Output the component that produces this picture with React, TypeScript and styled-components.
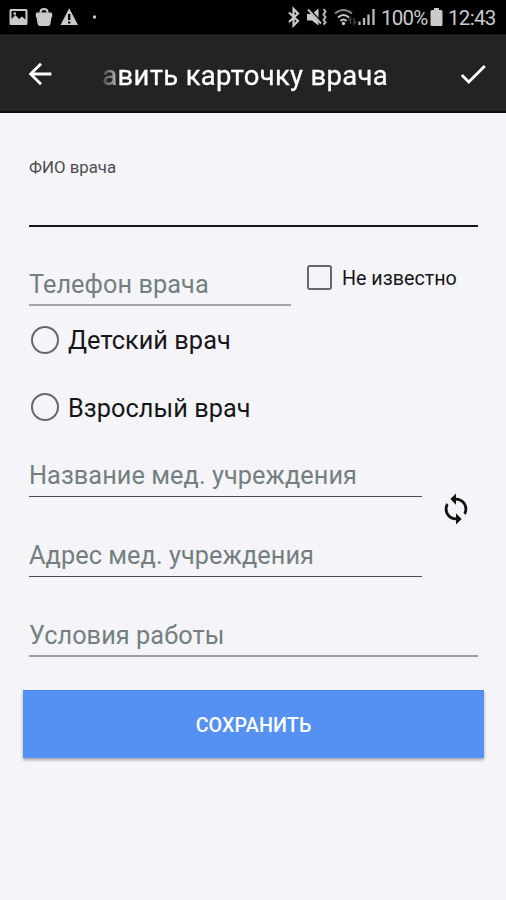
import React from "react";
import styled, { createGlobalStyle } from "styled-components";
import { MdArrowBack, MdCheck, MdSync } from "react-icons/md";

const GlobalStyle = createGlobalStyle`
  * { box-sizing: border-box; }
  body { margin: 0; background: #f4f4f9; font-family: Roboto, "Noto Sans", sans-serif; }
  svg { display: block; flex: none; }
`;

const Screen = styled.div`
  width: 506px;
  height: 900px;
  display: flex;
  flex-direction: column;
  background: #f4f4f9;
  overflow: hidden;
`;

const StatusBar = styled.div`
  height: 34px;
  display: flex;
  align-items: center;
  justify-content: space-between;
  padding: 0 11px 0 9px;
  background: #000;
  color: #cacaca;
`;

const StatusGroup = styled.div`
  display: flex;
  align-items: center;
`;

const StatusText = styled.span<{ $spacing: number; $width: number }>`
  width: ${(p) => p.$width}px;
  padding-top: 2px;
  font-size: 20.5px;
  letter-spacing: ${(p) => p.$spacing}px;
  line-height: 32px;
  white-space: nowrap;
`;

const Gap = styled.span<{ $w: number }>`
  width: ${(p) => p.$w}px;
`;

const AppBar = styled.header`
  height: 79px;
  display: flex;
  align-items: center;
  padding: 1px 16px 0 23px;
  background: #232323;
  border-bottom: 2px solid #111;
  border-top: 1px solid #171717;
  color: #fff;
`;

const TitleWindow = styled.div`
  width: 285px;
  height: 50px;
  margin-left: 46px;
  margin-right: auto;
  display: flex;
  justify-content: flex-end;
  overflow: hidden;
  mask-image: linear-gradient(to right, rgba(0, 0, 0, 0.2), rgba(0, 0, 0, 0.6) 12px, #000 15px);
`;

const Title = styled.h1`
  margin: 0;
  font-size: 27.4px;
  font-weight: 400;
  letter-spacing: 0.35px;
  line-height: 54px;
  white-space: nowrap;
  -webkit-text-stroke: 0.3px #fff;
`;

const Form = styled.main`
  display: flex;
  flex-direction: column;
  padding: 0 22px 0 23px;
`;

const NameField = styled.div`
  height: 114px;
  margin: 0 6px;
  padding-top: 43px;
  border-bottom: 2px solid #17171b;
`;

const Caption = styled.label`
  display: block;
  font-size: 16.8px;
  line-height: 22px;
  color: #4c4c50;
`;

const PhoneRow = styled.div`
  height: 79px;
  display: flex;
  margin-left: 6px;
`;

const Field = styled.div<{ $width: number; $height: number; $line: string; $thickness: number }>`
  width: ${(p) => p.$width}px;
  height: ${(p) => p.$height}px;
  display: flex;
  align-items: flex-end;
  padding-bottom: ${(p) => 5 - p.$thickness}px;
  border-bottom: ${(p) => p.$thickness}px solid ${(p) => p.$line};
`;

const Placeholder = styled.span`
  font-size: 25.3px;
  line-height: 32px;
  letter-spacing: 0.06px;
  color: #73807f;
  white-space: nowrap;
`;

const CheckOption = styled.label`
  height: 26px;
  display: flex;
  align-items: center;
  margin: 37px 0 0 16px;
  font-size: 19.7px;
  line-height: 24px;
  color: #161618;
  white-space: nowrap;
`;

const CheckLabel = styled.span`
  padding-top: 3px;
`;

const CheckBox = styled.span`
  width: 25px;
  height: 25px;
  margin-right: 10px;
  border: 2.5px solid #68686c;
  border-radius: 3px;
`;

const RadioGroup = styled.div`
  display: flex;
  flex-direction: column;
  padding-left: 8px;
`;

const RadioOption = styled.label`
  height: 67.5px;
  display: flex;
  align-items: center;
  font-size: 25.3px;
  line-height: 30px;
  letter-spacing: 0.06px;
  color: #161618;
`;

const RadioLabel = styled.span`
  padding-top: 3px;
`;

const RadioMark = styled.span`
  width: 28px;
  height: 28px;
  margin-right: 9px;
  border: 2.5px solid #68686c;
  border-radius: 50%;
`;

const ClinicRow = styled.div`
  display: flex;
  align-items: center;
  margin-left: 6px;
`;

const ClinicFields = styled.div`
  width: 393px;
  display: flex;
  flex-direction: column;
`;

const SyncButton = styled.button`
  margin: 0 0 0 17px;
  padding: 0;
  border: 0;
  background: none;
  color: #111;
`;

const LastField = styled.div`
  margin-left: 6px;
`;

const SaveButton = styled.button`
  height: 68px;
  margin-top: 33px;
  padding: 2px 0 0;
  border: 0;
  background: #5590f3;
  box-shadow: 0 2px 3px rgba(0, 0, 0, 0.32), inset 0 1px 0 #4b84e2;
  color: #fff;
  font-family: inherit;
  font-size: 19.7px;
  font-weight: 500;
  letter-spacing: 0.1px;
`;

export default function App() {
  return (
    <Screen>
      <GlobalStyle />
      <StatusBar>
        <StatusGroup>
          <svg width="92" height="20" viewBox="0 0 92 20" fill="#cacaca">
            <path fillRule="evenodd" d="M2 2h15q1.500 0 1.500 1.500v13q0 1.500-1.500 1.500H2q-1.500 0-1.500-1.500v-13Q.5 2 2 2Zm.5 2v8l4-4 3.500 4 3-2.500 3.500 3V4Zm3.200 1.200a1.400 1.400 0 1 1 0 2.800 1.400 1.400 0 0 1 0-2.800Z" />
            <path d="M31.500 6.500V5q0-3 3.500-3t3.500 3v1.500" fill="none" stroke="#cacaca" strokeWidth="2" />
            <path d="M28 5.500h14q1.200 0 1.200 1.200v3.300h-.6L41.500 16.500q-.4 2.500-2.500 2.500h-8q-2.100 0-2.500-2.500L27.400 10h-.6V6.700q0-1.200 1.200-1.200Z" />
            <path fillRule="evenodd" d="M60.200 1.300 69 18H51.500ZM59 7v6h2.400V7Zm0 7.500v2h2.400v-2Z" />
            <circle cx="85.500" cy="10" r="1.700" />
          </svg>
        </StatusGroup>
        <StatusGroup>
          <svg width="90" height="22" viewBox="0 0 90 22">
            <path d="M2 6.500l9 8.500-4.500 4.500V3l4.500 4.500-9 8.500" fill="none" stroke="#cacaca" strokeWidth="2.200" />
            <path d="M20 8h5l6.500-5.500v17L25 14.500h-5Z" fill="#cacaca" />
            <path d="M22.500 2.500l13 15" stroke="#000" strokeWidth="1.500" />
            <path d="M21 3.500l13 14M36.500 3l2 2.500-2 3 2 2.500-2 3 2 2.500-2 2" fill="none" stroke="#b8b8b8" strokeWidth="2" />
            <path d="M48 7.500q8.500-7 17 0" fill="none" stroke="#858585" strokeWidth="2" />
            <path d="M51 11.500q5.500-5 11 0M53.500 15q3-3 6 0" fill="none" stroke="#cacaca" strokeWidth="2" />
            <circle cx="56.500" cy="17.500" r="1.700" fill="#cacaca" />
            <path d="M63.500 18v-6l-2 2.500M67 12v6l2-2.500" fill="none" stroke="#3d3d3d" strokeWidth="1.500" />
            <path d="M72.500 19v-3.500M77 19v-7M81.500 19V8.500M86.500 19V3" stroke="#b8b8b8" strokeWidth="2.300" />
          </svg>
          <Gap $w={4} />
          <StatusText $spacing={-0.75} $width={46}>100%</StatusText>
          <Gap $w={3} />
          <svg width="13" height="20" viewBox="0 0 13 20">
            <path d="M4 1h5v2h2q1.500 0 1.500 1.500v13q0 1.500-1.500 1.500H2Q.5 19 .5 17.500v-13Q.5 3 2 3h2Z" fill="#cacaca" />
          </svg>
          <Gap $w={5} />
          <StatusText $spacing={-0.7} $width={47}>12:43</StatusText>
        </StatusGroup>
      </StatusBar>
      <AppBar>
        <MdArrowBack size={34} />
        <TitleWindow>
          <Title>Добавить карточку врача</Title>
        </TitleWindow>
        <MdCheck size={34} />
      </AppBar>
      <Form>
        <NameField>
          <Caption>ФИО врача</Caption>
        </NameField>
        <PhoneRow>
          <Field $width={262} $height={79} $line="#a3a3a8" $thickness={2}>
            <Placeholder>Телефон врача</Placeholder>
          </Field>
          <CheckOption>
            <CheckBox />
            <CheckLabel>Не известно</CheckLabel>
          </CheckOption>
        </PhoneRow>
        <RadioGroup>
          <RadioOption>
            <RadioMark />
            <RadioLabel>Детский врач</RadioLabel>
          </RadioOption>
          <RadioOption>
            <RadioMark />
            <RadioLabel>Взрослый врач</RadioLabel>
          </RadioOption>
        </RadioGroup>
        <ClinicRow>
          <ClinicFields>
            <Field $width={393} $height={56} $line="#4b494e" $thickness={1}>
              <Placeholder>Название мед. учреждения</Placeholder>
            </Field>
            <Field $width={393} $height={80} $line="#4b494e" $thickness={1}>
              <Placeholder>Адрес мед. учреждения</Placeholder>
            </Field>
          </ClinicFields>
          <SyncButton>
            <MdSync size={34} />
          </SyncButton>
        </ClinicRow>
        <LastField>
          <Field $width={449} $height={80} $line="#a09ea3" $thickness={2}>
            <Placeholder>Условия работы</Placeholder>
          </Field>
        </LastField>
        <SaveButton>СОХРАНИТЬ</SaveButton>
      </Form>
    </Screen>
  );
}
